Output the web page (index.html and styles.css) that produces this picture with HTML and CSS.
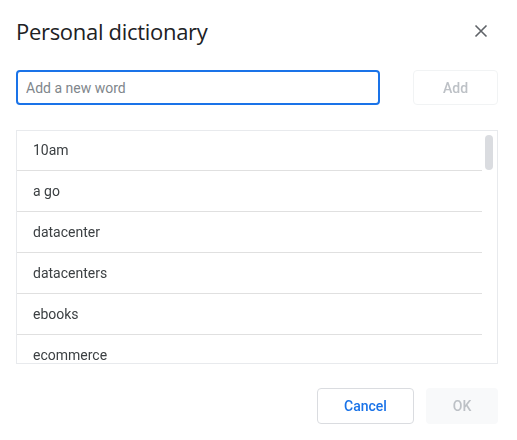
FILE: index.html
```html
<!DOCTYPE html>
<html lang="en">
<head>
    <meta charset="UTF-8">
    <meta name="viewport" content="width=device-width, initial-scale=1.0">
    <title>Personal dictionary</title>
    <link rel="stylesheet" href="styles.css">
</head>
<body>
    <div class="dialog">
        <div class="dialog-header">
            <h1>Personal dictionary</h1>
            <button class="close-btn" aria-label="Close">
                <svg width="14" height="14" viewBox="0 0 14 14">
                    <path d="M1.5 1.5 L12.5 12.5 M12.5 1.5 L1.5 12.5" stroke="#5f6368" stroke-width="1.6" fill="none"/>
                </svg>
            </button>
        </div>
        <div class="add-row">
            <input type="text" id="new-word" placeholder="Add a new word" autofocus>
            <button class="add-btn" disabled>Add</button>
        </div>
        <div class="word-list">
            <div class="words">
                <div class="word">10am</div>
                <div class="word">a go</div>
                <div class="word">datacenter</div>
                <div class="word">datacenters</div>
                <div class="word">ebooks</div>
                <div class="word">ecommerce</div>
            </div>
            <!-- scroll thumb drawn over the list -->
            <div class="scroll-thumb"></div>
        </div>
        <div class="dialog-footer">
            <button class="btn btn-cancel">Cancel</button>
            <button class="btn btn-ok" disabled>OK</button>
        </div>
    </div>
</body>
</html>
```

FILE: styles.css
```css
body {
    font-family: Roboto, Arial, sans-serif;
    background-color: white;
    margin: 0;
    padding: 0;
}

.dialog {
    padding: 16px 19px 16px 16px;
}

.dialog-header {
    display: flex;
    justify-content: space-between;
    align-items: center;
    height: 30px;
}

.dialog-header h1 {
    margin: 0;
    font-family: "Open Sans", Roboto, sans-serif;
    font-size: 22px;
    font-weight: 400;
    color: #202124;
    letter-spacing: -0.3px;
}

.close-btn {
    border: none;
    background: none;
    padding: 0;
    margin-right: 10px;
    width: 14px;
    height: 14px;
    display: flex;
    cursor: pointer;
}

.add-row {
    display: flex;
    align-items: center;
    margin-top: 24px;
}

.add-row input {
    width: 364px;
    height: 35px;
    box-sizing: border-box;
    border: 2px solid #1a73e8;
    border-radius: 4px;
    padding: 0 8px;
    font-family: Roboto, Arial, sans-serif;
    font-size: 14px;
    color: #202124;
    outline: none;
}

.add-row input::placeholder {
    color: #80868b;
}

.add-btn {
    margin-left: auto;
    width: 85px;
    height: 35px;
    border: 1px solid #f1f3f4;
    border-radius: 4px;
    background: #fff;
    color: #bdc1c6;
    font-family: Roboto, Arial, sans-serif;
    font-size: 14px;
    font-weight: 500;
}

.word-list {
    position: relative;
    margin-top: 25px;
    height: 232px;
    border: 1px solid #e8eaed;
    overflow: hidden;
}

.words {
    margin-top: -1px;
    margin-right: 15px;
}

.word {
    height: 40px;
    line-height: 40px;
    padding-left: 16px;
    border-bottom: 1px solid #e0e0e0;
    font-size: 14px;
    color: #3c4043;
}

.scroll-thumb {
    position: absolute;
    top: 4px;
    right: 4px;
    width: 8px;
    height: 35px;
    border-radius: 4px;
    background: #dadce0;
}

.dialog-footer {
    display: flex;
    justify-content: flex-end;
    gap: 12px;
    margin-top: 24px;
}

.btn {
    height: 36px;
    border-radius: 4px;
    font-family: Roboto, Arial, sans-serif;
    font-size: 14px;
    font-weight: 500;
    cursor: pointer;
}

.btn-cancel {
    width: 97px;
    border: 1px solid #dadce0;
    background: #fff;
    color: #1a73e8;
}

.btn-ok {
    width: 72px;
    border: none;
    background: #f8f9fa;
    color: #bdc1c6;
}
```
